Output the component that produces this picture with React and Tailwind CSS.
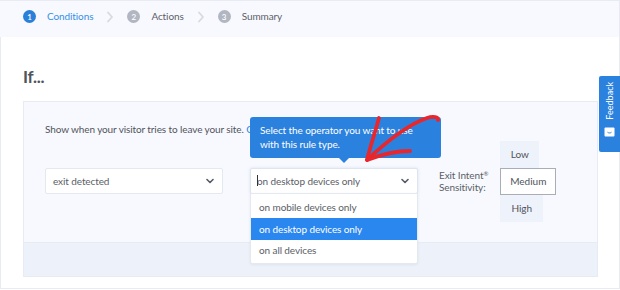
import React from "react";

const Chevron = ({ className }) => (
  <svg className={className} width="8" height="6" viewBox="0 0 8 6" fill="none">
    <path d="M1 1.5l3 3 3-3" stroke="#555b66" strokeWidth="1.6" strokeLinecap="round" strokeLinejoin="round" />
  </svg>
);

const StepArrow = () => (
  <svg width="8" height="12" viewBox="0 0 8 12" fill="none" className="mx-[13px]">
    <path d="M2 1.5l4 4.5-4 4.5" stroke="#d6dae1" strokeWidth="1.8" strokeLinecap="round" strokeLinejoin="round" />
  </svg>
);

const Step = ({ n, label, active }) => (
  <div className="flex items-center">
    <span
      className={`w-[13px] h-[13px] rounded-full flex items-center justify-center text-[8px] text-white font-semibold ${
        active ? "bg-[#2a7fd8]" : "bg-[#b1b6c2]"
      }`}
    >
      {n}
    </span>
    <span className={`ml-[11px] text-[10px] tracking-[-0.1px] ${active ? "text-[#3590e4]" : "text-[#5b5f68]"}`}>{label}</span>
  </div>
);

const App = () => {
  return (
    <div
      className="relative w-[620px] h-[290px] bg-white overflow-hidden"
      style={{ fontFamily: "Lato, 'Open Sans', sans-serif" }}
    >
      {/* steps bar */}
      <div className="h-[37px] bg-[#f8f9fe] border-t border-r border-[#e8ebf1] flex items-center pl-[23px] pb-[5px]">
        <Step n="1" label="Conditions" active />
        <StepArrow />
        <Step n="2" label="Actions" />
        <StepArrow />
        <Step n="3" label="Summary" />
      </div>

      {/* main card */}
      <div className="h-[252px] border-l border-r border-b border-[#e8ebf0] pl-[22px] pr-[21px] pt-[30px]">
        <h2 className="text-[17px] font-bold text-[#50545c] leading-[20px] tracking-[-0.3px]">If...</h2>

        <div className="mt-[14px] border border-[#e6ebf4] bg-[#f8f9fe] w-[575px]">
          <div className="pl-[21px] pt-[20px] pb-[21px]">
            <p className="whitespace-nowrap text-[10px] tracking-[-0.1px] text-[#50545c] leading-[14px]">
              Show when your visitor tries to leave your site. <span className="text-[#2b86e4]">Click here to learn more.</span>
            </p>

            <div className="mt-[5px] flex items-center h-[80px]">
              <div className="w-[178px] h-[26px] bg-white border border-[#e3e8f1] rounded-[2px] flex items-center justify-between pl-[7px] pr-[8px]">
                <span className="text-[10px] tracking-[-0.1px] text-[#5a5e66]">exit detected</span>
                <Chevron />
              </div>

              <div className="relative ml-[27px] w-[168px] h-[26px] bg-white border border-[#dfe5ef] rounded-[2px] flex items-center justify-between pl-[6px] pr-[8px] shadow-[0_0_3px_rgba(120,150,200,0.25)]">
                <span className="text-[10px] tracking-[-0.1px] text-[#5a5e66]">
                  <span className="inline-block w-px h-[11px] bg-[#333] align-middle mr-[-1px] relative top-[-1px]"></span>
                  on desktop devices only
                </span>
                <Chevron />

                {/* dropdown menu */}
                <div className="absolute left-[-1px] top-[24px] w-[168px] bg-white border border-[#e3e8f1] rounded-b-[2px] shadow-[0_1px_3px_rgba(0,0,0,0.06)] pt-[3px] pb-[2px] z-10">
                  <div className="h-[21px] flex items-center pl-[8px] text-[10px] tracking-[-0.1px] text-[#5a5e66]">on mobile devices only</div>
                  <div className="h-[22px] flex items-center pl-[8px] text-[10px] tracking-[-0.1px] text-white bg-[#2b87f0]">on desktop devices only</div>
                  <div className="h-[21px] flex items-center pl-[8px] text-[10px] tracking-[-0.1px] text-[#5a5e66]">on all devices</div>
                </div>
              </div>

              <div className="ml-[21px] text-[10px] tracking-[-0.1px] leading-[12px] text-[#5a5e66]">
                Exit Intent<sup className="text-[6px]">®</sup>
                <br />
                Sensitivity:
              </div>

              <div className="ml-[12px] flex flex-col items-start">
                <div className="w-[39px] h-[27px] bg-[#eef2fa] flex items-center justify-center text-[10px] text-[#50545c]">Low</div>
                <div className="w-[56px] h-[27px] bg-white border border-[#a9adb7] flex items-center justify-center text-[10px] text-[#50545c]">Medium</div>
                <div className="w-[43px] h-[27px] bg-[#eef2fa] flex items-center justify-center text-[10px] text-[#50545c]">High</div>
              </div>
            </div>
          </div>
          <div className="h-[34px] bg-[#edf1f9] border-t border-[#e6ebf4]"></div>
        </div>
      </div>

      {/* tooltip */}
      <div className="absolute left-[250px] top-[117px] w-[191px] h-[41px] bg-[#2b82de] rounded-[3px] px-[10px] pt-[6px] text-[10px] tracking-[-0.1px] leading-[14px] text-white z-20">
        Select the operator you want to use
        <br />
        with this rule type.
        <span className="absolute left-[89px] bottom-[-5px] w-0 h-0 border-l-[5px] border-r-[5px] border-t-[5px] border-l-transparent border-r-transparent border-t-[#2b82de]"></span>
      </div>

      {/* red arrow */}
      <svg className="absolute left-[355px] top-[105px] z-30" width="100" height="70" viewBox="0 0 100 70" fill="none">
        <path
          d="M12 55 C 30 38, 52 20, 72 13 C 78 11, 84 12, 83 15"
          stroke="#e8262b"
          strokeWidth="3.8"
          strokeLinecap="round"
          strokeLinejoin="round"
        />
        <path
          d="M24 13 C 20 28, 15 42, 12 55 C 25 50, 40 46, 55 46"
          stroke="#e8262b"
          strokeWidth="3.8"
          strokeLinecap="round"
          strokeLinejoin="round"
        />
      </svg>

      {/* feedback tab */}
      <div className="absolute left-[599px] top-[76px] w-[21px] h-[76px] bg-[#2b82de] rounded-l-[2px] flex flex-col items-center pt-[6px]">
        <span className="text-[9px] text-white [writing-mode:vertical-rl] rotate-180 leading-none">Feedback</span>
        <svg className="mt-[7px]" width="11" height="10" viewBox="0 0 11 10">
          <rect x="0.5" y="0.5" width="10" height="9" rx="1" fill="white" />
          <path d="M3.5 5.2c1 1 3 1 4 0" stroke="#2b82de" strokeWidth="1" fill="none" />
        </svg>
      </div>
    </div>
  );
};

export default App;
